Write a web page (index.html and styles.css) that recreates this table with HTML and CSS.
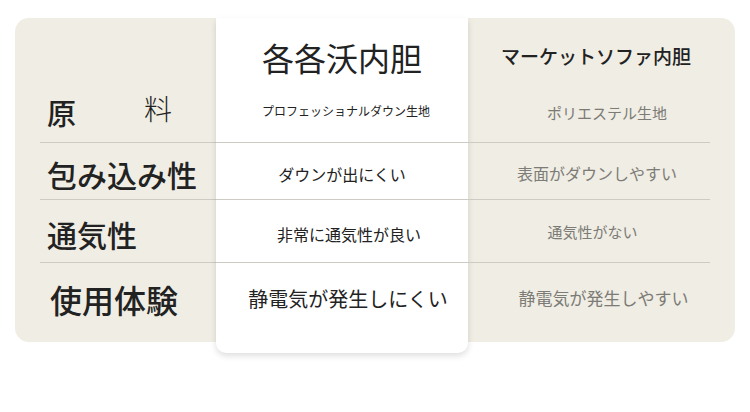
FILE: index.html
```html
<!DOCTYPE html>
<html lang="ja">
<head>
<meta charset="utf-8">
<link rel="stylesheet" href="styles.css">
</head>
<body>
<div class="panel">
  <div class="col col-label">
    <div class="cell head"></div>
    <div class="cell r1 lined"><span class="gen">原</span><span class="ryo">料</span></div>
    <div class="cell r2 lined"><span class="lab">包み込み性</span></div>
    <div class="cell r3 lined"><span class="lab">通気性</span></div>
    <div class="cell r4"><span class="lab big">使用体験</span></div>
  </div>
  <div class="col col-main">
    <div class="cell head main-head">各各沃内胆</div>
    <div class="cell r1 lined m1">プロフェッショナルダウン生地</div>
    <div class="cell r2 lined m2">ダウンが出にくい</div>
    <div class="cell r3 lined m3">非常に通気性が良い</div>
    <div class="cell r4 m4">静電気が発生しにくい</div>
  </div>
  <div class="col col-other">
    <div class="cell head other-head">マーケットソファ内胆</div>
    <div class="cell r1 lined o1">ポリエステル生地</div>
    <div class="cell r2 lined o2">表面がダウンしやすい</div>
    <div class="cell r3 lined o3">通気性がない</div>
    <div class="cell r4 o4">静電気が発生しやすい</div>
  </div>
</div>
</body>
</html>
```
FILE: styles.css
```css
html, body {
  margin: 0;
  padding: 0;
  background: #ffffff;
}
body {
  width: 750px;
  height: 412px;
  overflow: hidden;
  font-family: "Noto Sans CJK JP", "Noto Sans", sans-serif;
  color: #222222;
}
.panel {
  margin: 18px 0 0 15px;
  width: 720px;
  height: 324px;
  background: #efede4;
  border-radius: 14px;
  display: flex;
  align-items: flex-start;
}
.col {
  display: flex;
  flex-direction: column;
}
.col-label {
  width: 201px;
}
.col-main {
  width: 252px;
  height: 335px;
  background: #ffffff;
  border-radius: 0 0 10px 10px;
  box-shadow: 0 3px 6px rgba(0, 0, 0, 0.13);
}
.col-other {
  width: 267px;
}
.cell {
  box-sizing: border-box;
  display: flex;
  align-items: center;
  justify-content: center;
  white-space: nowrap;
}
.lined {
  border-bottom: 1px solid #cdcbc4;
}
.head { height: 64px; }
.r1 { height: 61px; }
.r2 { height: 57px; }
.r3 { height: 63px; }
.r4 { height: 79px; }
.col-main .r4 { height: 90px; }

/* label column */
.col-label .cell {
  margin-left: 25px;
  justify-content: flex-start;
  padding-left: 7px;
}
.col-label .r2, .col-label .r3 { padding-top: 5px; }
.col-label .r4 { padding-bottom: 8px; padding-left: 10px; }
.gen {
  font-size: 29px;
  font-weight: 500;
}
.ryo {
  font-size: 28px;
  font-weight: 300;
  margin-left: 68px;
  margin-bottom: 8px;
}
.lab {
  font-size: 30px;
  font-weight: 500;
}
.lab.big { font-size: 32px; }

/* main column */
.main-head {
  font-size: 32px;
  padding-top: 14px;
}
.m1 {
  font-size: 12px;
  padding-bottom: 4px;
  padding-left: 8px;
}
.m2 {
  font-size: 16px;
  padding-top: 5px;
}
.m3 {
  font-size: 16px;
  padding-top: 5px;
  padding-left: 14px;
}
.m4 {
  font-size: 20px;
  padding-bottom: 20px;
  padding-left: 12px;
}

/* other column */
.col-other .cell {
  margin-right: 25px;
  color: #7c7b76;
}
.other-head {
  font-size: 19px;
  font-weight: 500;
  color: #222222 !important;
  padding-top: 10px;
  padding-left: 14px;
}
.o1 { font-size: 15px; padding-left: 36px; }
.o2 { font-size: 16px; padding-top: 3px; padding-left: 16px; }
.o3 { font-size: 15px; padding-top: 1px; padding-left: 7px; }
.o4 { font-size: 17px; padding-bottom: 11px; padding-left: 29px; }
```
